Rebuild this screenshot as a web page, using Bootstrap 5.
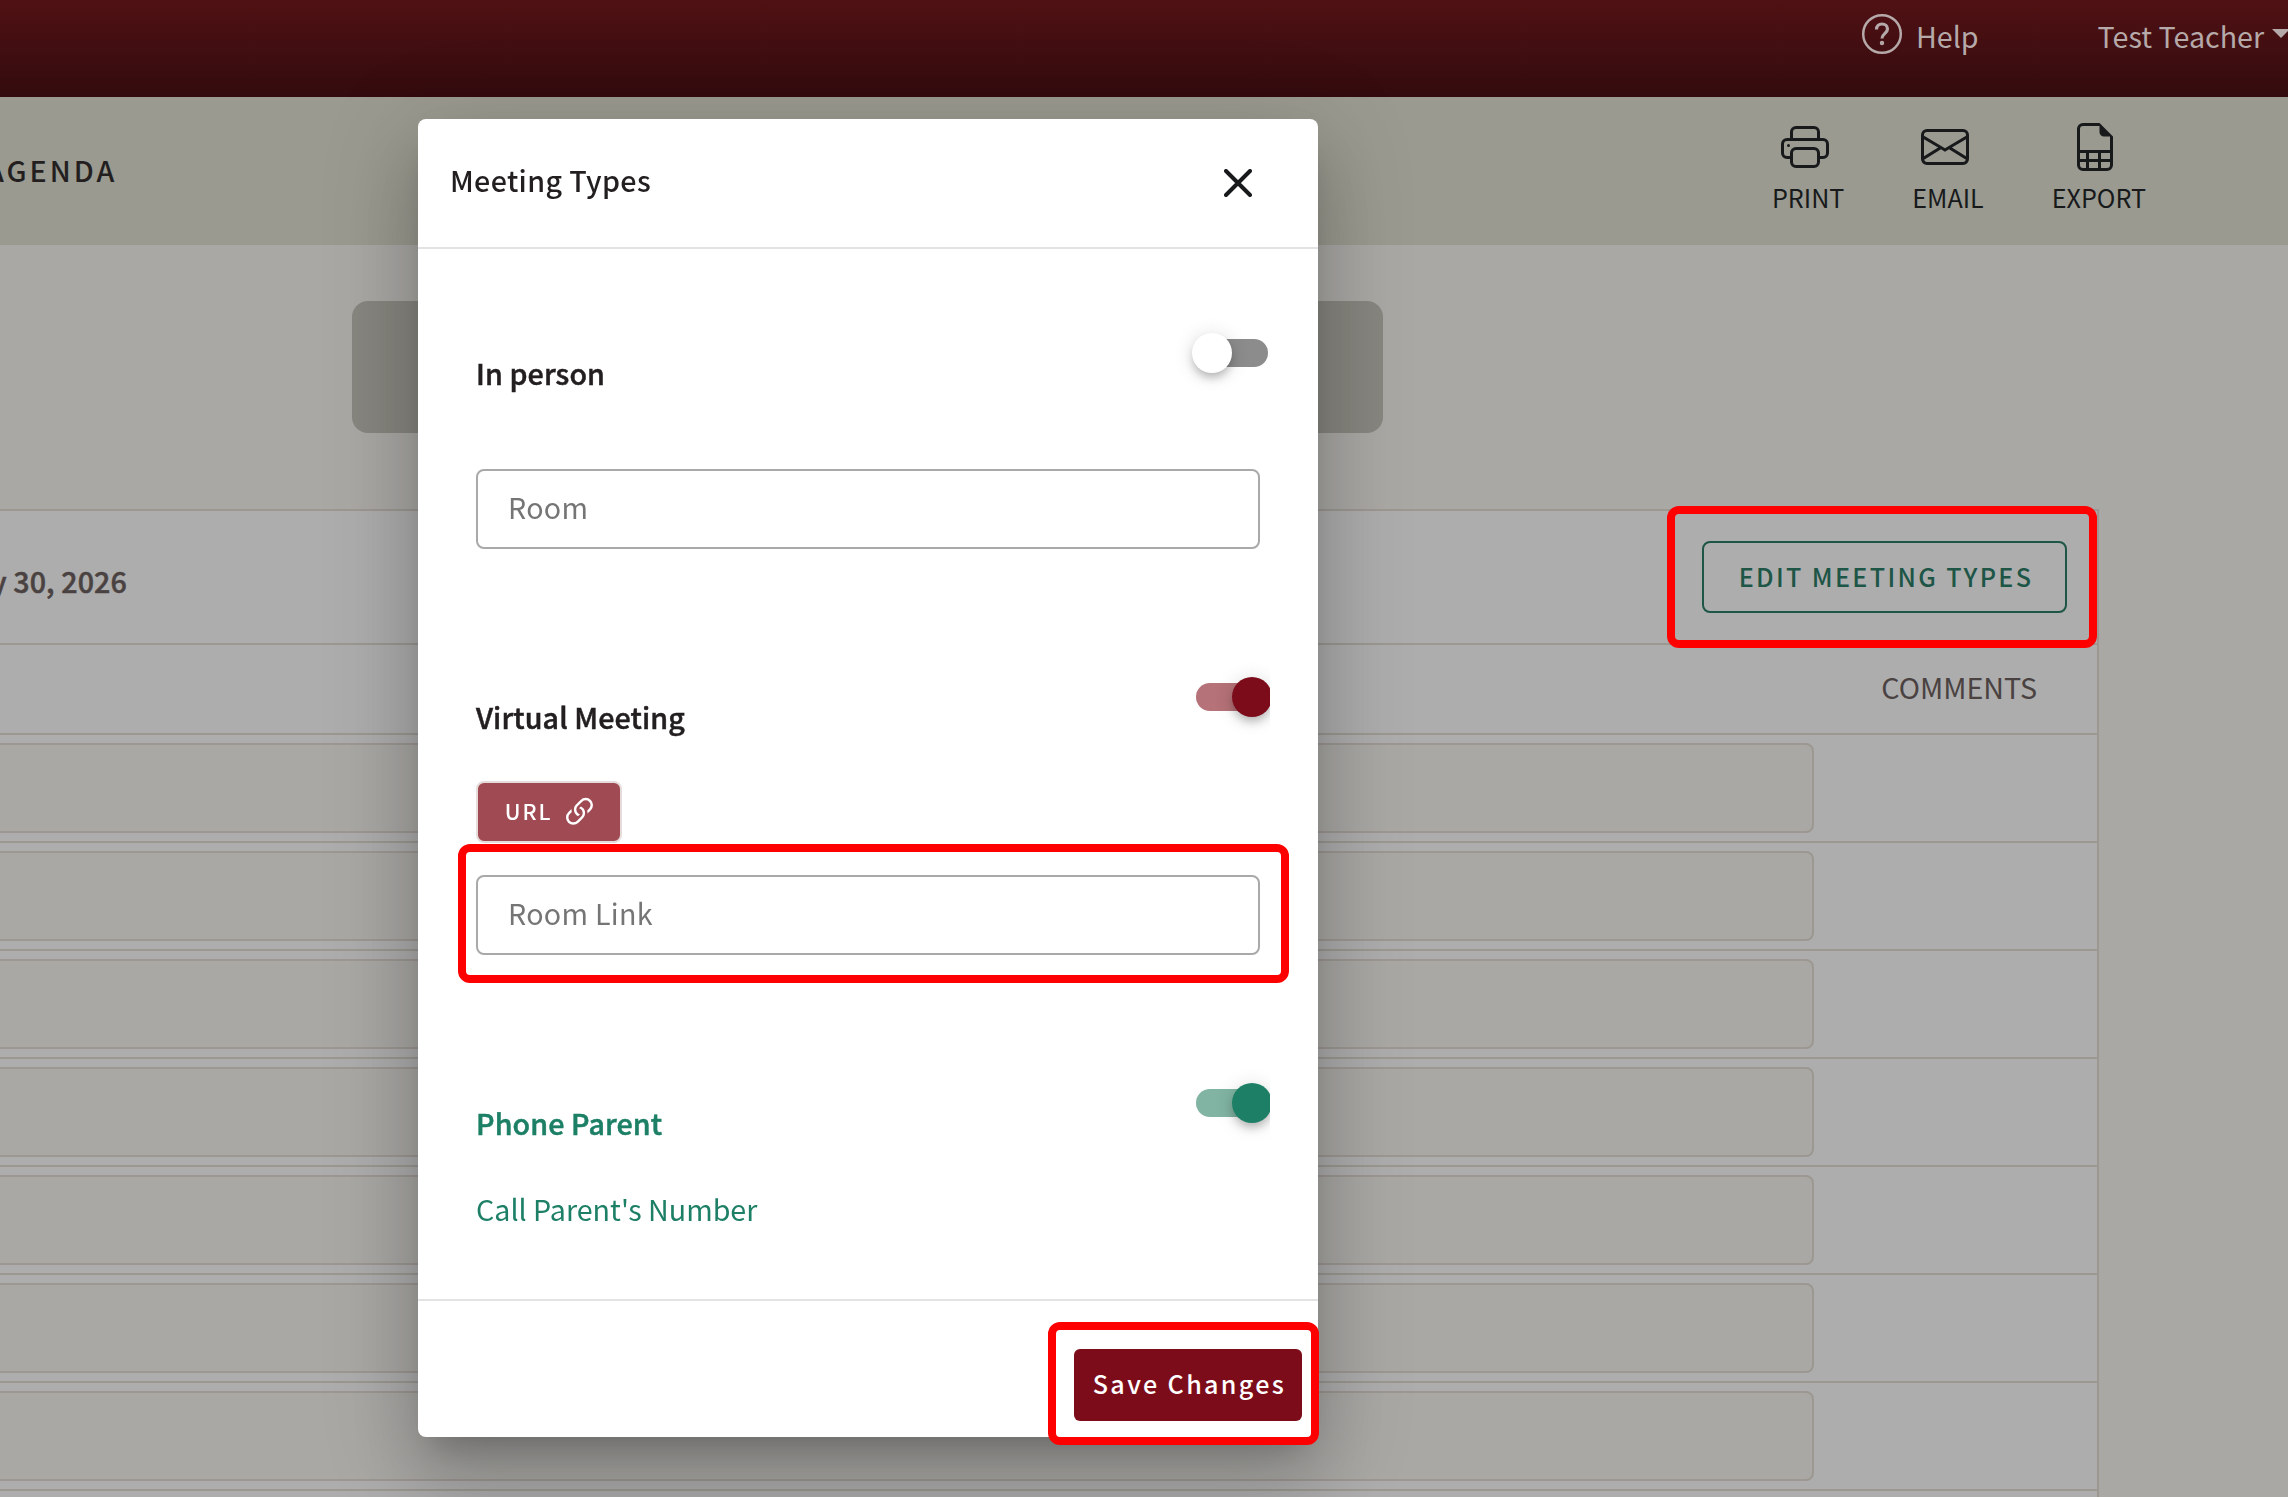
<!DOCTYPE html>
<html lang="en">

<head>
    <meta charset="UTF-8">
    <meta name="viewport" content="width=device-width, initial-scale=1.0">
    <title>Meeting Types</title>
    <link href="https://cdn.jsdelivr.net/npm/bootstrap@5.3.0/dist/css/bootstrap.min.css" rel="stylesheet">
    <style>
        body {
            height: 1497px;
            overflow: hidden;
            background: #a9a8a5;
            color: #231f20;
            font-family: "Noto Sans CJK SC", "Open Sans", sans-serif;
            font-size: 28.65px;
            line-height: 48px;
        }

        /* top bars */
        .top-bar {
            height: 97px;
            background: linear-gradient(#501114, #330b0e);
            color: #b5a9a9;
        }

        .help-link { margin-right: 119px; gap: 12px; }
        .help-link svg { margin-top: 12px; }
        .user-menu { margin-right: -2px; gap: 8px; white-space: nowrap; }
        .user-caret {
            border-left: 9px solid transparent;
            border-right: 9px solid transparent;
            border-top: 9px solid #b5a9a9;
            margin-bottom: 5px;
        }

        .tool-bar { height: 148px; background: #9a9a90; }
        .agenda-tab { letter-spacing: 3px; font-weight: 500; margin-left: -14px; padding-bottom: 3px; }
        .tool-item { font-size: 25.1px; line-height: 36px; color: #17191b; }
        .tool-item svg { margin: 0 7px 8px 0; }
        .tool-group { gap: 68px; padding-right: 142px; padding-top: 26px; }

        /* schedule behind the dialog */
        .info-pill {
            width: 1031px;
            height: 132px;
            margin: 56px 0 76px 352px;
            border-radius: 16px;
            background: #87867f;
        }

        .schedule {
            width: 2099px;
            background: #adadad;
            border-top: 2px solid #9c9791;
            border-right: 2px solid #9c9791;
        }

        .schedule-title { height: 134px; border-bottom: 2px solid #9c9791; padding-right: 30px; }
        .schedule-date { margin-left: -9px; padding-top: 8px; color: #4a4241; }
        .schedule-cols { height: 90px; border-bottom: 2px solid #9c9791; padding: 0 60px 4px 0; color: #4a4241; }
        .schedule-row { height: 108px; border-bottom: 2px solid #9c9791; padding: 8px 0; }
        .slot {
            width: 1814px;
            height: 90px;
            border: 2px solid #9c9791;
            border-left: 0;
            border-radius: 0 8px 8px 0;
            background: #a9a8a5;
        }

        .btn-edit {
            width: 365px;
            height: 72px;
            padding: 0 0 0 3px;
            border: 2px solid #1d5546;
            border-radius: 8px;
            color: #1d5546;
            font-size: 25.1px;
            font-weight: 500;
            letter-spacing: 2.35px;
        }

        /* dialog */
        .types-dialog { width: 900px; max-width: none; margin: 119px 0 0 418px; }
        .types-dialog .modal-content {
            height: 1318px;
            border: 0;
            border-radius: 8px;
            color: #231f20;
            box-shadow: 0 22px 30px -14px rgba(0, 0, 0, .2), 0 48px 76px 6px rgba(0, 0, 0, .14), 0 18px 92px 16px rgba(0, 0, 0, .12);
        }

        .types-dialog .modal-header { height: 130px; padding: 0 66px 0 32px; border-bottom: 2px solid #e3e3e3; }
        .types-dialog .modal-title { font-size: 28.65px; line-height: 48px; letter-spacing: .35px; padding-bottom: 7px; }
        .types-dialog .modal-body { padding: 66px 58px 0; }
        .types-dialog .modal-footer { height: 138px; padding: 48px 16px 16px; border-top: 2px solid #e3e3e3; }
        .types-dialog .modal-footer > * { margin: 0; }

        .type-head { height: 120px; }
        .type-head.in-person { height: 154px; }
        .type-label { margin-top: 34px; }
        .type-label, .schedule-date { font-weight: 500; letter-spacing: .1px; -webkit-text-stroke: .5px currentColor; }
        .type-gap { margin-bottom: 110px; }
        .type-phone { color: #1d8066; }

        .switch-box { width: 116px; height: 76px; margin-right: -10px; padding: 18px 0 0 38px; overflow: hidden; }
        .switch-track { width: 68px; height: 28px; margin: 6px 0 0 8px; border-radius: 14px; background: #8c8c8c; }
        .switch-thumb {
            width: 40px;
            height: 40px;
            margin: -6px 0 0 -8px;
            border-radius: 50%;
            background: #fff;
            box-shadow: 0 6px 10px -2px rgba(0, 0, 0, .25), 0 2px 20px rgba(0, 0, 0, .14);
        }
        .switch-on .switch-track { margin-left: 4px; background: #b57278; }
        .switch-on .switch-thumb { margin-left: 36px; background: #7d0c1a; }
        .switch-green .switch-track { background: #81b4a3; }
        .switch-green .switch-thumb { background: #1d8066; }

        .room-input {
            height: 80px;
            padding: 0 30px 5px;
            border: 2px solid #a9a9a9;
            border-radius: 8px;
            font-size: 28.65px;
            line-height: 48px;
            letter-spacing: .3px;
        }
        .room-input::placeholder { color: #757575; }

        .btn-url {
            width: 146px;
            height: 62px;
            margin-top: 2px;
            padding: 0 0 0 2px;
            gap: 8px;
            border: 2px solid #e6dcdc;
            border-radius: 8px;
            background: #a04b53;
            color: #fff;
            font-size: 21.5px;
            font-weight: 500;
            letter-spacing: 1.9px;
        }
        .btn-url span { padding-bottom: 1px; }
        .btn-url svg { margin-right: -4px; }

        .btn-save {
            width: 228px;
            height: 72px;
            padding: 0 0 2px 3px;
            border: 0;
            border-radius: 6px;
            background: #7d0c1a;
            color: #fff;
            font-size: 25.1px;
            font-weight: 500;
            letter-spacing: 2.35px;
        }

        /* red callouts */
        .callout { position: absolute; border: 8px solid #f00; border-radius: 12px; pointer-events: none; }
        .callout-edit { inset: -35px -30px -35px -35px; }
        .callout-link { inset: -31px -29px -28px -18px; }
        .callout-save { inset: -27px -17px -24px -26px; }
    </style>
</head>

<body>
    <nav class="top-bar d-flex justify-content-end align-items-start">
        <div class="help-link d-flex">
            <svg width="44" height="44" viewBox="0 0 44 44" fill="none" stroke="#b5a9a9">
                <circle cx="22" cy="22" r="18.8" stroke-width="2.5" />
                <path d="M16.5 17.5c0-3.500 2.300-5.500 5.500-5.500s5.500 2 5.500 5c0 4.300-5.500 4.500-5.500 9.500" stroke-width="3.2" />
                <circle cx="22" cy="31" r="1" stroke-width="2.4" />
            </svg>
            <span class="pt-2 mt-1">Help</span>
        </div>
        <div class="user-menu d-flex align-items-center pt-2 mt-1">
            <span>Test Teacher</span>
            <span class="user-caret"></span>
        </div>
    </nav>

    <div class="tool-bar d-flex justify-content-between">
        <div class="agenda-tab align-self-center">AGENDA</div>
        <div class="tool-group d-flex align-items-start">
            <div class="tool-item d-flex flex-column align-items-center">
                <svg width="48" height="48" viewBox="0 0 16 16" fill="currentColor">
                    <path d="M2.5 8a.5.5 0 1 0 0-1 .5.5 0 0 0 0 1z" />
                    <path d="M5 1a2 2 0 0 0-2 2v2H2a2 2 0 0 0-2 2v3a2 2 0 0 0 2 2h1v1a2 2 0 0 0 2 2h6a2 2 0 0 0 2-2v-1h1a2 2 0 0 0 2-2V7a2 2 0 0 0-2-2h-1V3a2 2 0 0 0-2-2H5zM4 3a1 1 0 0 1 1-1h6a1 1 0 0 1 1 1v2H4V3zm1 5a2 2 0 0 0-2 2v1H2a1 1 0 0 1-1-1V7a1 1 0 0 1 1-1h12a1 1 0 0 1 1 1v3a1 1 0 0 1-1 1h-1v-1a2 2 0 0 0-2-2H5zm7 2v3a1 1 0 0 1-1 1H5a1 1 0 0 1-1-1v-3a1 1 0 0 1 1-1h6a1 1 0 0 1 1 1z" />
                </svg>
                <span>PRINT</span>
            </div>
            <div class="tool-item d-flex flex-column align-items-center">
                <svg width="48" height="48" viewBox="0 0 16 16" fill="currentColor">
                    <path d="M0 4a2 2 0 0 1 2-2h12a2 2 0 0 1 2 2v8a2 2 0 0 1-2 2H2a2 2 0 0 1-2-2V4Zm2-1a1 1 0 0 0-1 1v.217l7 4.2 7-4.2V4a1 1 0 0 0-1-1H2Zm13 2.383-4.708 2.825L15 11.105V5.383Zm-.034 6.876-5.64-3.471L8 9.583l-1.326-.795-5.64 3.47A1 1 0 0 0 2 13h12a1 1 0 0 0 .966-.741ZM1 11.105l4.708-2.897L1 5.383v5.722Z" />
                </svg>
                <span>EMAIL</span>
            </div>
            <div class="tool-item d-flex flex-column align-items-center">
                <svg width="48" height="48" viewBox="0 0 16 16" fill="currentColor">
                    <path d="M14 14V4.5L9.5 0H4a2 2 0 0 0-2 2v12a2 2 0 0 0 2 2h8a2 2 0 0 0 2-2zM9.5 3A1.5 1.5 0 0 0 11 4.5h2V9H3V2a1 1 0 0 1 1-1h5.5v2zM3 12v-2h2v2H3zm0 1h2v2H4a1 1 0 0 1-1-1v-1zm3 2v-2h3v2H6zm4 0v-2h3v1a1 1 0 0 1-1 1h-2zm3-3h-3v-2h3v2zm-7 0v-2h3v2H6z" />
                </svg>
                <span>EXPORT</span>
            </div>
        </div>
    </div>

    <main>
        <div class="info-pill"></div>
        <section class="schedule">
            <div class="schedule-title d-flex justify-content-between align-items-center">
                <div class="schedule-date">y 30, 2026</div>
                <div class="position-relative">
                    <button type="button" class="btn btn-edit d-block">EDIT MEETING TYPES</button>
                    <div class="callout callout-edit"></div>
                </div>
            </div>
            <div class="schedule-cols d-flex justify-content-end align-items-center">COMMENTS</div>
            <div id="scheduleRows"></div>
        </section>
    </main>

    <div class="modal d-block overflow-hidden" tabindex="-1">
        <div class="modal-dialog types-dialog">
            <div class="modal-content">
                <div class="modal-header">
                    <h5 class="modal-title">Meeting Types</h5>
                    <svg width="28" height="28" viewBox="0 0 28 28" stroke="#17191b" stroke-width="4" stroke-linecap="round">
                        <path d="M2 2L26 26M26 2L2 26" />
                    </svg>
                </div>
                <div class="modal-body">
                    <div class="type-head in-person d-flex justify-content-between align-items-start">
                        <div class="type-label">In person</div>
                        <div class="switch-box">
                            <div class="switch-track d-flex"><div class="switch-thumb flex-shrink-0"></div></div>
                        </div>
                    </div>
                    <input type="text" class="form-control room-input type-gap" placeholder="Room">

                    <div class="type-head d-flex justify-content-between align-items-start">
                        <div class="type-label">Virtual Meeting</div>
                        <div class="switch-box switch-on">
                            <div class="switch-track d-flex"><div class="switch-thumb flex-shrink-0"></div></div>
                        </div>
                    </div>
                    <button type="button" class="btn btn-url d-flex justify-content-center align-items-center">
                        <span>URL</span>
                        <svg width="39" height="39" viewBox="0 0 16 16" fill="currentColor">
                            <path d="M4.715 6.542 3.343 7.914a3 3 0 1 0 4.243 4.243l1.828-1.829A3 3 0 0 0 8.586 5.5L8 6.086a1.002 1.002 0 0 0-.154.199 2 2 0 0 1 .861 3.337L6.88 11.45a2 2 0 1 1-2.83-2.83l.793-.792a4.018 4.018 0 0 1-.128-1.287z" />
                            <path d="M6.586 4.672A3 3 0 0 0 7.414 9.5l.775-.776a2 2 0 0 1-.896-3.346L9.12 3.55a2 2 0 1 1 2.83 2.83l-.793.792c.112.42.155.855.128 1.287l1.372-1.372a3 3 0 1 0-4.243-4.243L6.586 4.672z" />
                        </svg>
                    </button>
                    <div class="type-gap mt-4 pt-2">
                        <div class="position-relative">
                            <input type="text" class="form-control room-input" placeholder="Room Link">
                            <div class="callout callout-link"></div>
                        </div>
                    </div>

                    <div class="type-phone">
                        <div class="type-head d-flex justify-content-between align-items-start">
                            <div class="type-label">Phone Parent</div>
                            <div class="switch-box switch-on switch-green">
                                <div class="switch-track d-flex"><div class="switch-thumb flex-shrink-0"></div></div>
                            </div>
                        </div>
                        <div>Call Parent's Number</div>
                    </div>
                </div>
                <div class="modal-footer align-items-start">
                    <div class="position-relative">
                        <button type="button" class="btn btn-save d-block">Save Changes</button>
                        <div class="callout callout-save"></div>
                    </div>
                </div>
            </div>
        </div>
    </div>

    <script src="https://cdn.jsdelivr.net/npm/bootstrap@5.3.0/dist/js/bootstrap.bundle.min.js"></script>
    <script>
        const scheduleRows = document.getElementById('scheduleRows');
        for (let i = 0; i < 8; i++) {
            scheduleRows.innerHTML += '<div class="schedule-row"><div class="slot"></div></div>';
        }
    </script>
</body>

</html>
